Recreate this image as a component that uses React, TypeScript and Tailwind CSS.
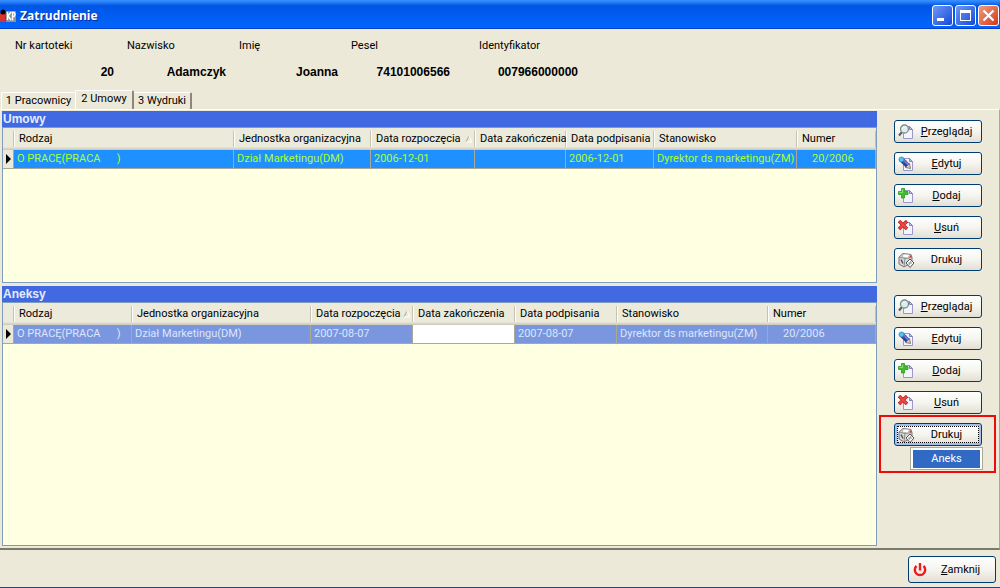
import React from "react";
import clsx from "clsx";

interface Column {
  label: string;
  width: string;
  sorted?: boolean;
}

interface GridPanelProps {
  title: string;
  columns: Column[];
  row: string[];
  active?: boolean;
}

const contractColumns: Column[] = [
  { label: "Rodzaj", width: "w-[220px]" },
  { label: "Jednostka organizacyjna", width: "w-[137px]" },
  { label: "Data rozpoczęcia", width: "w-[104px]", sorted: true },
  { label: "Data zakończenia", width: "w-[91px]" },
  { label: "Data podpisania", width: "w-[88px]" },
  { label: "Stanowisko", width: "w-[143px]" },
  { label: "Numer", width: "w-auto" },
];

const annexColumns: Column[] = [
  { label: "Rodzaj", width: "w-[118px]" },
  { label: "Jednostka organizacyjna", width: "w-[179px]" },
  { label: "Data rozpoczęcia", width: "w-[102px]", sorted: true },
  { label: "Data zakończenia", width: "w-[102px]" },
  { label: "Data podpisania", width: "w-[102px]" },
  { label: "Stanowisko", width: "w-[151px]" },
  { label: "Numer", width: "w-auto" },
];

const contractRow = ["O PRACĘ(PRACA      )", "Dział Marketingu(DM)", "2006-12-01", "", "2006-12-01", "Dyrektor ds marketingu(ZM)", "20/2006"];
const annexRow = ["O PRACĘ(PRACA      )", "Dział Marketingu(DM)", "2007-08-07", "", "2007-08-07", "Dyrektor ds marketingu(ZM)", "20/2006"];

const person = [
  { label: "Nr kartoteki", value: "20", width: "w-[99px] mr-[13px]" },
  { label: "Nazwisko", value: "Adamczyk", width: "w-[99px] mr-[13px]" },
  { label: "Imię", value: "Joanna", width: "w-[99px] mr-[13px]" },
  { label: "Pesel", value: "74101006566", width: "w-[99px] mr-[29px]" },
  { label: "Identyfikator", value: "007966000000", width: "w-[99px]" },
];

const Page = () => (
  <>
    <path d="M5.5 2.5h6l3 3v9h-9z" fill="#f4f4ff" stroke="#9a98c8" />
    <path d="M11.500 2.500v3h3z" fill="#c9c8ea" stroke="#8583bb" />
  </>
);

const ViewIcon = () => (
  <svg viewBox="0 0 16 16" className="size-4 shrink-0">
    <Page />
    <path d="M4 8L1 11.500" stroke="#55585c" strokeWidth="2" />
    <circle cx="6.500" cy="5" r="4" fill="#dcefe9" stroke="#7d8d8d" strokeWidth="1.300" />
    <path d="M4.500 4.500q1-2 3-1.500" fill="none" stroke="#fff" />
  </svg>
);

const EditIcon = () => (
  <svg viewBox="0 0 16 16" className="size-4 shrink-0">
    <Page />
    <path d="M4 4l6 6" stroke="#243f9e" strokeWidth="5" />
    <path d="M5 3.500l5.500 5.500" stroke="#4f8bee" strokeWidth="2" />
    <path d="M7.500 11.500l4-4 1 5z" fill="#e8cfa8" stroke="#555" strokeWidth=".7" />
    <circle cx="3.500" cy="3.500" r="2.500" fill="#4cc9ee" stroke="#247c9c" strokeWidth=".7" />
    <path d="M5 7.500l3-3" stroke="#d33" />
  </svg>
);

const AddIcon = () => (
  <svg viewBox="0 0 16 16" className="size-4 shrink-0">
    <Page />
    <path d="M3.500.5h3v3h3.500v3H6.500V10h-3V6.500H.5v-3h3z" fill="#43bd2c" stroke="#2a9a20" strokeWidth=".8" />
    <path d="M4.500 1.500v3h-3" fill="none" stroke="#8ee06e" />
  </svg>
);

const DeleteIcon = () => (
  <svg viewBox="0 0 16 16" className="size-4 shrink-0">
    <Page />
    <path d="M1 1l8 8M9 1L1 9" stroke="#b91d1d" strokeWidth="3.400" />
    <path d="M1.500 1.500l7 7M8.500 1.500l-7 7" stroke="#ef4a44" strokeWidth="1.800" />
  </svg>
);

const PrintIcon = () => (
  <svg viewBox="0 0 16 16" className="size-4 shrink-0">
    <path d="M1 5l4-3.500 8 1 1 3v5L6 15l-5-3z" fill="#d9d9d7" stroke="#77777a" />
    <path d="M1 5l6 1.500 7-1M7 6.500L6 15" fill="none" stroke="#8c8c8c" />
    <path d="M5.500 2L4 5l6 1 1.500-3.500z" fill="#fff" stroke="#999" strokeWidth=".6" />
    <path d="M8 11l4-4 4 4-4 4.500z" fill="#f7f7f7" stroke="#555" />
    <path d="M10 11h4M11 13l2-4" stroke="#888" strokeWidth=".8" />
    <path d="M3 7.500l2 4" stroke="#555" strokeWidth="1.500" />
    <circle cx="12.500" cy="4.500" r="1" fill="#e23b2e" />
  </svg>
);

const PowerIcon = () => (
  <svg viewBox="0 0 16 16" className="size-4 shrink-0" fill="none" stroke="#ee1c1c">
    <path d="M4.500 4a5.200 5.200 0 1 0 7 0" strokeWidth="2.400" />
    <path d="M8 1v7.500" strokeWidth="2.400" />
  </svg>
);

const AppIcon = () => (
  <svg viewBox="0 0 16 16" className="size-4 shrink-0">
    <path d="M0 6h5v8H0z" fill="#d8342c" />
    <circle cx="3" cy="4" r="2.500" fill="#000" />
    <rect x="6" y="3" width="10" height="11" fill="#8f9099" />
    <path d="M7.500 4v8M11 4L8 8l3 4M12.500 12.500V4.500H14q2 2 0 4h-1.500" fill="none" stroke="#fff" strokeWidth="1.400" />
  </svg>
);

interface ToolButtonProps {
  icon: React.ReactNode;
  hotkey?: string;
  text: string;
  focused?: boolean;
  className?: string;
}

const ToolButton: React.FC<ToolButtonProps> = ({ icon, hotkey, text, focused, className = "h-[23px]" }) => (
  <button
    type="button"
    className={clsx(
      "relative flex w-[88px] items-center rounded-[3px] border border-[#003c74] bg-linear-to-b from-white via-[#f5f4ef] to-[#e3dfd4] pr-[2px] pl-[3px]",
      focused && "shadow-[inset_0_0_0_2px_#a5bfee]",
      className
    )}
  >
    {icon}
    <span className="flex-1 text-center">
      {hotkey && <u className="underline-offset-1">{hotkey}</u>}
      {text}
    </span>
    {focused && <span className="absolute inset-[2px] border border-dotted border-black" />}
  </button>
);

const GridPanel: React.FC<GridPanelProps> = ({ title, columns, row, active }) => (
  <div className="flex min-w-0 flex-1 flex-col">
    <h2 className="h-4 bg-[#4169e1] pl-px font-['Liberation_Sans',sans-serif] text-[12px] leading-4 font-bold text-[#e6ecff]">{title}</h2>
    <div className="flex-1 border border-[#7f9db9] bg-[#ffffe1]">
      <table aria-label={title} className="w-full table-fixed border-separate border-spacing-0 whitespace-pre">
        <thead>
          <tr className="h-[22px] bg-linear-to-b from-[#ebeadb] from-85% to-[#cbc7b8]">
            <th className="w-[11px] p-0">
              <div className="h-4 border-r border-[#c5c2b2]" />
            </th>
            {columns.map((col) => (
              <th key={col.label} className={clsx("p-0 text-left font-normal", col.width)}>
                <div className="flex h-4 items-center border-r border-l border-r-[#c5c2b2] border-l-white pl-1">
                  {col.label}
                  {col.sorted && (
                    <svg viewBox="0 0 8 8" className="mr-px ml-auto size-2 shrink-0" fill="none">
                      <path d="M1 7L4 1" stroke="#aca899" />
                      <path d="M4 1l3 6H1" stroke="#fff" />
                    </svg>
                  )}
                </div>
              </th>
            ))}
          </tr>
        </thead>
        <tbody>
          <tr className={clsx("h-[19px]", active ? "bg-[#1e90ff] text-[#adff2f]" : "bg-[#7a96df] text-[#dce6fa]")}>
            <td className="border-r border-b border-[#aca899] bg-[#ece9d8] p-0">
              <svg viewBox="0 0 6 10" className="ml-[3px] h-[10px] w-[6px]">
                <path d="M0 0l5 5-5 5z" fill="#000" />
              </svg>
            </td>
            {row.map((cell, i) => (
              <td
                key={columns[i].label}
                className={clsx(
                  "border-r border-b border-[#aca899] py-0 pr-0",
                  i === row.length - 1 ? "pl-[15px]" : "pl-[3px]",
                  !cell && !active && "bg-white"
                )}
              >
                {cell}
              </td>
            ))}
          </tr>
        </tbody>
      </table>
    </div>
  </div>
);

const EditButtons = () => (
  <>
    <ToolButton icon={<ViewIcon />} hotkey="P" text="rzeglądaj" />
    <ToolButton icon={<EditIcon />} hotkey="E" text="dytuj" />
    <ToolButton icon={<AddIcon />} hotkey="D" text="odaj" />
    <ToolButton icon={<DeleteIcon />} hotkey="U" text="suń" />
  </>
);

const TitleBar = () => (
  <header className="flex h-[29px] items-center bg-linear-to-b from-[#3a93ff] via-[#0055e5] via-20% to-[#0066ff] pt-[2px] pr-[1px] shadow-[inset_0_-1px_0_#0041c4]">
    <AppIcon />
    <h1 className="ml-1 flex-1 font-['Open_Sans',sans-serif] text-[12px] font-bold text-white [text-shadow:1px_1px_0_#0a2a8a]">Zatrudnienie</h1>
    <div className="flex gap-[2px]">
      <button type="button" aria-label="Minimalizuj" className="size-[21px] rounded-[3px] border border-white bg-linear-to-br from-[#6f97f5] to-[#1746d8]">
        <svg viewBox="0 0 19 19" fill="#fff">
          <rect x="4" y="12" width="7" height="3" />
        </svg>
      </button>
      <button type="button" aria-label="Maksymalizuj" className="size-[21px] rounded-[3px] border border-white bg-linear-to-br from-[#6f97f5] to-[#1746d8]">
        <svg viewBox="0 0 19 19" fill="#fff">
          <path d="M4 4h11v11H4zM5 7v7h9V7z" fillRule="evenodd" />
        </svg>
      </button>
      <button type="button" aria-label="Zamknij okno" className="size-[21px] rounded-[3px] border border-white bg-linear-to-br from-[#f09a80] to-[#d13508]">
        <svg viewBox="0 0 19 19" stroke="#fff" strokeWidth="2.200">
          <path d="M4.500 4.500l10 10M14.500 4.500l-10 10" />
        </svg>
      </button>
    </div>
  </header>
);

export default function App() {
  return (
    <div className="flex min-h-screen flex-col border-b border-[#0046d5] bg-[#ece9d8] font-[Roboto,sans-serif] text-[11px] leading-4 text-black">
      <TitleBar />
      <dl className="flex pt-[9px] pb-[10px] pl-[15px]">
        {person.map((field) => (
          <div key={field.label} className={field.width}>
            <dt>{field.label}</dt>
            <dd className="mt-[10px] text-right font-['Liberation_Sans',sans-serif] text-[12px] font-bold">{field.value}</dd>
          </div>
        ))}
      </dl>
      <nav role="tablist" className="flex h-[19px] items-end pl-px">
        <button type="button" role="tab" className="h-[17px] w-[74px] rounded-t-[2px] border-t border-l border-white">1 Pracownicy</button>
        <button type="button" role="tab" aria-selected="true" className="h-[19px] w-[59px] rounded-t-[2px] border-t border-r-2 border-l border-white border-r-[#8b887a] pb-[2px]">2 Umowy</button>
        <button type="button" role="tab" className="h-[17px] w-[58px] rounded-tr-[2px] border-t border-r-2 border-white border-r-[#8b887a]">3 Wydruki</button>
      </nav>
      <main className="flex flex-1 flex-col gap-[3px] border-t border-r border-b-2 border-t-white border-r-[#aca899] border-b-[#7c7a6e] pt-px pb-[2px] pl-[2px]">
        <section className="flex">
          <GridPanel title="Umowy" columns={contractColumns} row={contractRow} active />
          <div className="flex w-[122px] flex-col gap-[9px] pt-[9px] pb-3 pl-[17px]">
            <EditButtons />
            <ToolButton icon={<PrintIcon />} text="Drukuj" />
          </div>
        </section>
        <section className="flex flex-1">
          <GridPanel title="Aneksy" columns={annexColumns} row={annexRow} />
          <div className="flex w-[122px] flex-col gap-[9px] pt-[9px] pl-[17px]">
            <EditButtons />
            <div className="relative w-[88px]">
              <ToolButton icon={<PrintIcon />} text="Drukuj" focused />
              <div role="menu" className="absolute top-6 right-[-1px] w-[73px] border border-[#aca899] bg-white p-[2px] pb-px">
                <button type="button" role="menuitem" className="block h-[18px] w-full bg-[#316ac5] text-center text-white">Aneks</button>
              </div>
              <div className="pointer-events-none absolute -top-2 -right-[14px] -left-[15px] h-[58px] border-2 border-[#ee0a0a]" />
            </div>
          </div>
        </section>
      </main>
      <footer className="flex justify-end pt-[6px] pr-1 pb-1">
        <ToolButton icon={<PowerIcon />} hotkey="Z" text="amknij" className="h-[27px]" />
      </footer>
    </div>
  );
}
